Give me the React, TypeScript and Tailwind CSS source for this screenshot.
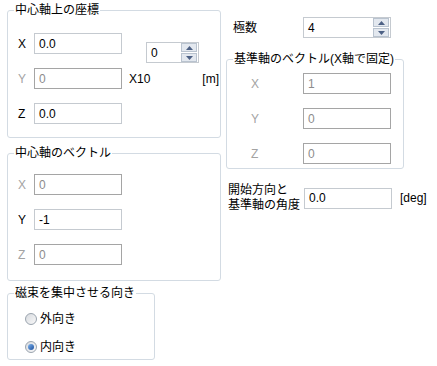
import React from "react";

const Group = ({ title, className, children }: { title: string; className: string; children?: React.ReactNode }) => (
  <div className={`relative border border-[#d3dbe3] rounded-[3px] ${className}`}>
    <span className="absolute left-[6px] -top-[8px] bg-white px-[1px] text-[12px] leading-[14px] text-black">{title}</span>
    {children}
  </div>
);

const Box = ({ value, disabled, w = "w-[88px]" }: { value: string; disabled?: boolean; w?: string }) => (
  <div
    className={`${w} h-[21px] bg-white border flex items-center pl-[4px] text-[12px] ${
      disabled ? "border-[#a5a5a5] text-[#8c8c8c]" : "border-[#c5cad0] text-black"
    }`}
  >
    {value}
  </div>
);

const Row = ({ label, value, disabled, labelW = "w-[26px] pl-[10px]" }: { label: string; value: string; disabled?: boolean; labelW?: string }) => (
  <div className="flex items-center">
    <span className={`${labelW} text-[12px] ${disabled ? "text-[#a3a3a3]" : "text-black"}`}>{label}</span>
    <Box value={value} disabled={disabled} />
  </div>
);

const Spin = ({ value, w }: { value: string; w: string }) => (
  <div className={`${w} h-[21px] bg-white border border-[#c5cad0] flex items-center justify-between`}>
    <span className="pl-[4px] text-[12px] text-black">{value}</span>
    <div className="flex flex-col gap-[1px] pr-[1px]">
      <div className="w-[16px] h-[9px] bg-[#e3e8ef] border border-[#b9c3cf] flex items-center justify-center">
        <svg width="7" height="4" viewBox="0 0 7 4"><path d="M3.5 0 L7 4 L0 4 Z" fill="#4d6185" /></svg>
      </div>
      <div className="w-[16px] h-[9px] bg-[#e3e8ef] border border-[#b9c3cf] flex items-center justify-center">
        <svg width="7" height="4" viewBox="0 0 7 4"><path d="M0 0 L7 0 L3.5 4 Z" fill="#4d6185" /></svg>
      </div>
    </div>
  </div>
);

const Radio = ({ label, checked }: { label: string; checked?: boolean }) => (
  <div className="flex items-center gap-[3px]">
    <div className="w-[12px] h-[12px] rounded-full border border-[#9aa4ae] bg-gradient-to-br from-[#d8dbe0] to-[#f8f8f8] flex items-center justify-center">
      {checked && <div className="w-[6px] h-[6px] rounded-full bg-gradient-to-br from-[#7fb4ee] to-[#1c4f9c]" />}
    </div>
    <span className="text-[12px] text-black">{label}</span>
  </div>
);

export default function App() {
  return (
    <div className="w-[437px] h-[366px] bg-white flex font-['Liberation_Sans','Noto_Sans_CJK_JP',sans-serif] leading-[14px] overflow-hidden">
      {/* left column */}
      <div className="ml-[7px] pt-[10px] w-[214px] flex flex-col">
        <Group title="中心軸上の座標" className="h-[128px] pt-[22px] flex">
          <div className="flex flex-col gap-[14px]">
            <Row label="X" value="0.0" />
            <Row label="Y" value="0" disabled />
            <Row label="Z" value="0.0" />
          </div>
          <div className="ml-[7px] w-[90px] flex flex-col">
            <div className="ml-[17px] mt-[9px]">
              <Spin value="0" w="w-[53px]" />
            </div>
            <div className="mt-[9px] flex justify-between text-[12px] text-black">
              <span>X10</span>
              <span>[m]</span>
            </div>
          </div>
        </Group>
        <Group title="中心軸のベクトル" className="mt-[15px] h-[128px] pt-[20px]">
          <div className="flex flex-col gap-[14px]">
            <Row label="X" value="0" disabled />
            <Row label="Y" value="-1" />
            <Row label="Z" value="0" disabled />
          </div>
        </Group>
        <Group title="磁束を集中させる向き" className="mt-[12px] w-[148px] h-[67px] pt-[18px] pl-[17px]">
          <div className="flex flex-col gap-[14px]">
            <Radio label="外向き" />
            <Radio label="内向き" checked />
          </div>
        </Group>
      </div>

      {/* right column */}
      <div className="ml-[5px] pt-[17px] w-[205px] flex flex-col">
        <div className="flex items-center">
          <span className="w-[77px] pl-[7px] text-[12px] text-black">極数</span>
          <Spin value="4" w="w-[88px]" />
        </div>
        <Group title="基準軸のベクトル(X軸で固定)" className="mt-[21px] w-[178px] h-[110px] pt-[13px]">
          <div className="flex flex-col gap-[14px]">
            <Row label="X" value="1" disabled labelW="w-[76px] pl-[24px]" />
            <Row label="Y" value="0" disabled labelW="w-[76px] pl-[24px]" />
            <Row label="Z" value="0" disabled labelW="w-[76px] pl-[24px]" />
          </div>
        </Group>
        <div className="mt-[14px] flex items-center">
          <span className="w-[78px] pl-[2px] text-[12px] leading-[15px] text-black">
            開始方向と
            <br />
            基準軸の角度
          </span>
          <Box value="0.0" w="w-[88px]" />
          <span className="ml-[8px] text-[12px] text-black">[deg]</span>
        </div>
      </div>
    </div>
  );
}
